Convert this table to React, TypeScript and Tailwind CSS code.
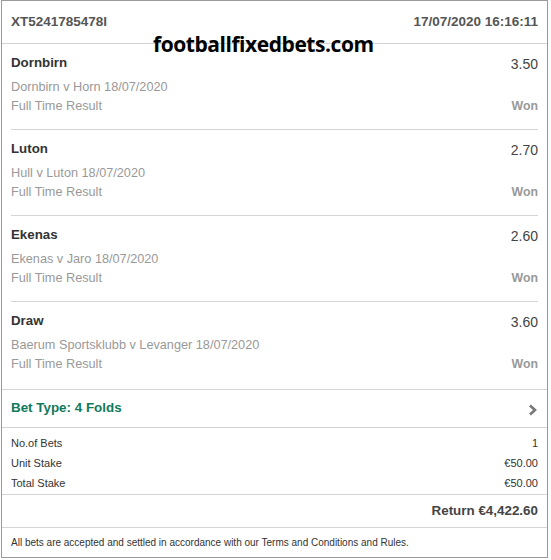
const selections = [
  { name: 'Dornbirn', odds: '3.50', event: 'Dornbirn v Horn 18/07/2020' },
  { name: 'Luton', odds: '2.70', event: 'Hull v Luton 18/07/2020' },
  { name: 'Ekenas', odds: '2.60', event: 'Ekenas v Jaro 18/07/2020' },
  { name: 'Draw', odds: '3.60', event: 'Baerum Sportsklubb v Levanger 18/07/2020' },
];

const stakes = [
  { label: 'No.of Bets', value: '1' },
  { label: 'Unit Stake', value: '€50.00' },
  { label: 'Total Stake', value: '€50.00' },
];

export default function App() {
  return (
    <div className="w-[551px] h-[560px] bg-white font-['Liberation_Sans']">
      <div className="relative ml-px w-[547px] h-[558px] border border-[#9a9a9a] bg-white">
        {/* Cabecera */}
        <div className="flex h-[43px] items-center justify-between pl-[9px] pr-[9px] border-b border-[#d4d4d4] text-[13.5px] font-bold text-[#555]">
          <span>XT5241785478I</span>
          <span>17/07/2020 16:16:11</span>
        </div>

        {/* Marca de agua */}
        <div className="absolute left-[151px] top-[29px] font-['Open_Sans'] text-[21px] font-bold leading-[28px] tracking-[-0.45px] text-black">
          footballfixedbets.com
        </div>

        {/* Selecciones */}
        <div className="border-b border-[#d4d4d4]">
          {selections.map((s, i) => {
            const last = i === selections.length - 1;
            return (
              <div key={s.name} className="pl-[9px] pr-[9px]">
                <div className={last ? 'pt-[9px] pb-[15px]' : 'pt-[9px] pb-[13px] border-b border-[#d4d4d4]'}>
                  <div className="flex h-[20px] items-center justify-between">
                    <span className="text-[13.3px] font-bold text-[#333]">{s.name}</span>
                    <span className="text-[14px] text-[#444] translate-y-[1px]">{s.odds}</span>
                  </div>
                  <div className="mt-[5px] flex h-[19px] items-center text-[12.7px] text-[#999]">{s.event}</div>
                  <div className="flex h-[19px] items-center justify-between text-[12.7px] text-[#999]">
                    <span>Full Time Result</span>
                    <span className="text-[12.3px] font-bold">Won</span>
                  </div>
                </div>
              </div>
            );
          })}
        </div>

        {/* Tipo de apuesta */}
        <div className="flex h-[38px] items-center justify-between pl-[9px] pr-[9px] border-b border-[#d4d4d4]">
          <span className="text-[13.4px] font-bold text-[#127a5b]">Bet Type: 4 Folds</span>
          <svg width="10" height="12" viewBox="0 0 10 12" className="mt-[3px]">
            <path d="M2 1.5 L7 6 L2 10.5" fill="none" stroke="#777" strokeWidth="2.6" />
          </svg>
        </div>

        {/* Importes */}
        <div className="pt-[5px] pb-px pl-[9px] pr-[9px] border-b border-[#d4d4d4] text-[11px] text-[#333]">
          {stakes.map((r) => (
            <div key={r.label} className="flex h-[20px] items-center justify-between">
              <span>{r.label}</span>
              <span>{r.value}</span>
            </div>
          ))}
        </div>

        <div className="flex h-[33px] items-center justify-end pl-[9px] pr-[9px] border-b border-[#d4d4d4] text-[13.4px] font-bold text-[#444]">
          Return €4,422.60
        </div>

        <div className="flex h-[28px] items-center pl-[9px] pr-[9px] text-[10px] text-[#333]">
          All bets are accepted and settled in accordance with our Terms and Conditions and Rules.
        </div>
      </div>
    </div>
  );
}
